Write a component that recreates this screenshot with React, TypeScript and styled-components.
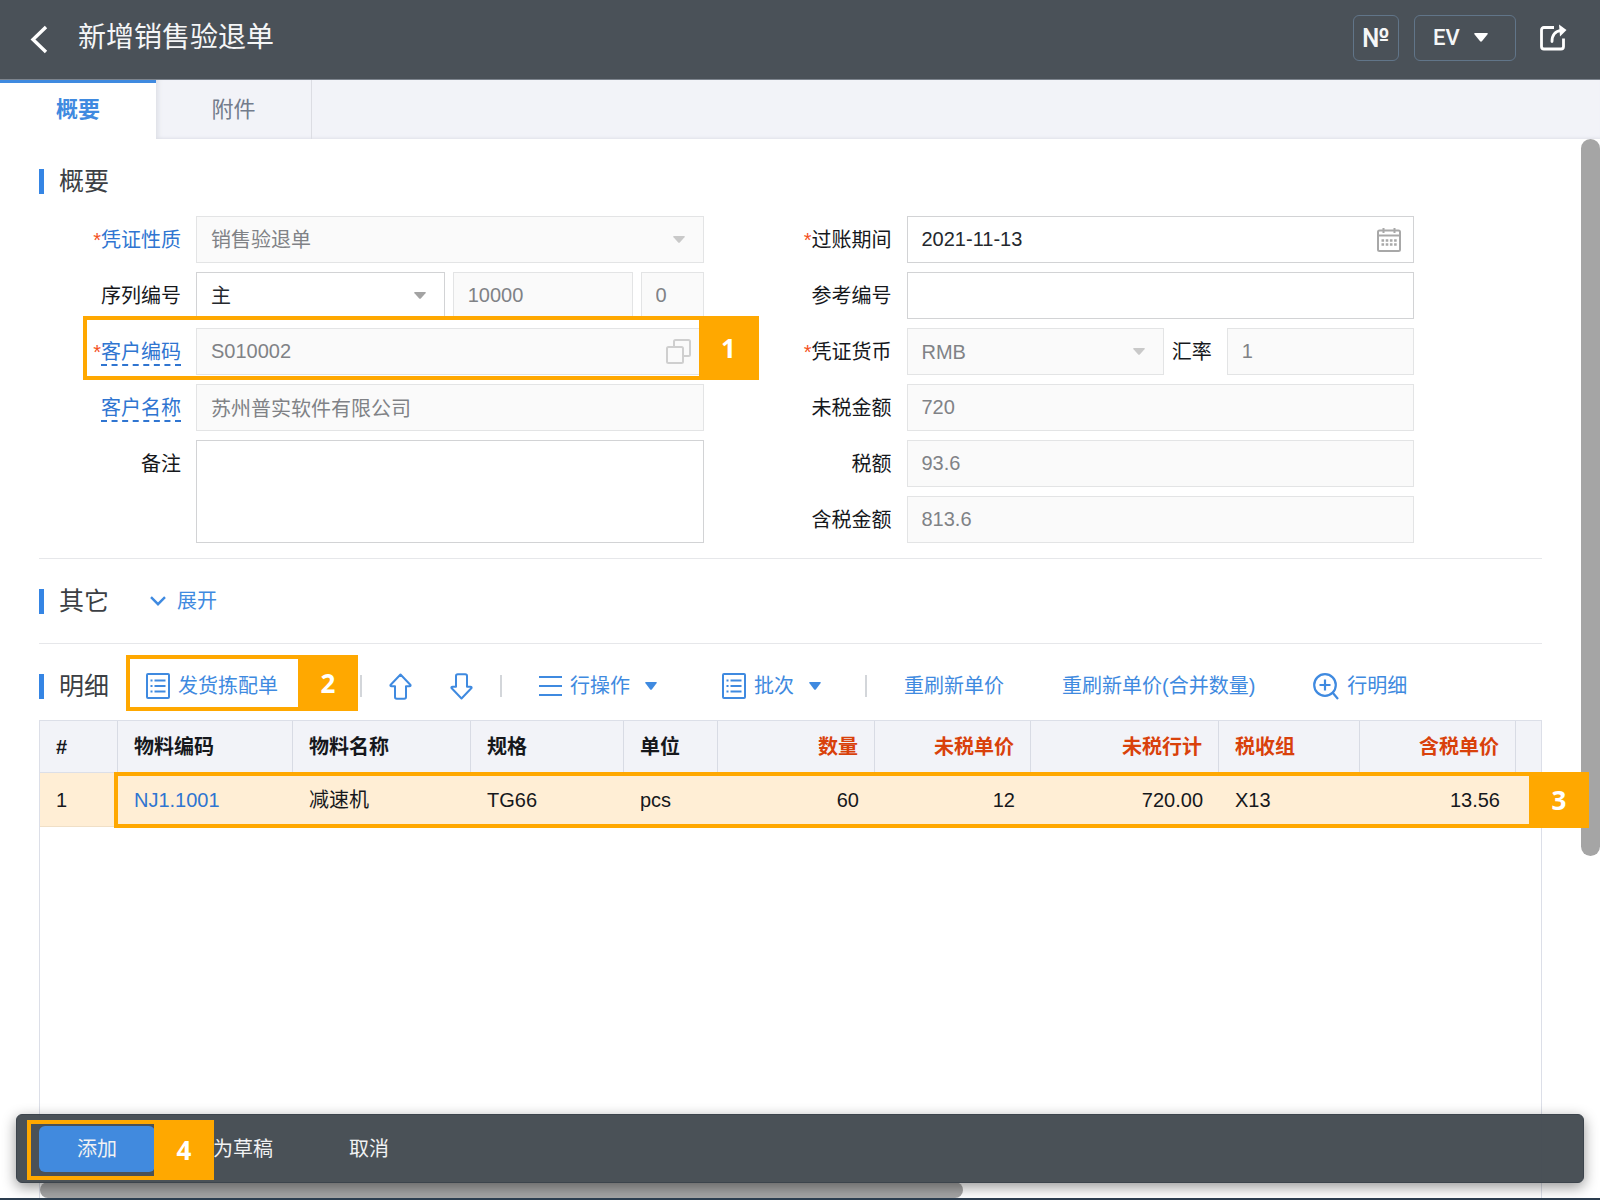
import React from "react";
import styled, { createGlobalStyle, css } from "styled-components";

const blue = "#3f8ae0";
const slate = "#4a5158";
const amber = "#ffa800";
const line = "#dcdfe8";
const sans = `"Liberation Sans", "Noto Sans CJK SC", sans-serif`;

const GlobalStyle = createGlobalStyle`
  *, *::before, *::after { box-sizing: border-box; }
  body { margin: 0; background: #fff; }
  button, input, select, textarea { font: inherit; color: inherit; }
  button { border: 0; padding: 0; background: none; cursor: pointer; white-space: nowrap; }
  a { text-decoration: none; }
  svg { display: block; flex: none; }
`;

const Page = styled.div`
  position: relative;
  display: flex;
  flex-direction: column;
  height: 100vh;
  overflow: hidden;
  border-bottom: 2px solid #2b3d4f;
  background: #fff;
  color: #16181c;
  font-family: ${sans};
  font-size: 20px;
  line-height: 24px;
`;

const Header = styled.header`
  display: flex;
  align-items: center;
  flex: none;
  height: 80px;
  padding: 0 33px 4px 30px;
  border-bottom: 1px solid #7d848d;
  background: ${slate};
  color: #f5f6f7;
`;

const Title = styled.h1`
  flex: 1;
  margin: 0 0 0 28px;
  font-size: 28px;
  line-height: 36px;
  font-weight: 400;
`;

const HeaderActions = styled.div`
  display: flex;
  align-items: center;
  gap: 15px;
`;

const OutlineButton = styled.button<{ $wide?: boolean }>`
  display: flex;
  align-items: center;
  justify-content: ${(p) => (p.$wide ? "flex-start" : "center")};
  gap: 14px;
  width: ${(p) => (p.$wide ? 102 : 46)}px;
  height: 46px;
  padding-left: ${(p) => (p.$wide ? 18 : 0)}px;
  border: 1px solid #617589;
  border-radius: 6px;
  font-family: ${(p) => (p.$wide ? "Roboto" : "Inter")}, sans-serif;
  font-size: ${(p) => (p.$wide ? 22 : 25)}px;
  font-weight: ${(p) => (p.$wide ? 500 : 700)};
`;

const ShareButton = styled.button`
  margin-left: 8px;
`;

const Tabs = styled.nav`
  display: flex;
  flex: none;
  height: 59px;
  background: #f2f3f8;
  box-shadow: inset 0 -3px 3px -2px #dfe1e8;
`;

const Tab = styled.button<{ $active?: boolean }>`
  width: 156px;
  font-size: 22px;
  color: #737c8c;
  border-right: 1px solid #dcdde3;
  box-shadow: inset 6px 0 5px -4px #dcdee5;
  ${(p) =>
    p.$active &&
    css`
      border-right: 0;
      background: #fff;
      color: ${blue};
      font-weight: 700;
      box-shadow: inset 0 3px 0 ${blue};
    `}
`;

const Content = styled.main`
  position: relative;
  display: flex;
  flex-direction: column;
  flex: 1;
  min-height: 0;
  padding: 0 58px 0 39px;
`;

const Section = styled.section<{ $fill?: boolean }>`
  display: flex;
  flex-direction: column;
  flex: ${(p) => (p.$fill ? "1" : "none")};
  min-height: 0;
  border-bottom: ${(p) => (p.$fill ? "0" : "1px solid #e6e7ea")};
`;

const SectionHead = styled.div<{ $height: number; $top?: number }>`
  display: flex;
  align-items: center;
  flex: none;
  height: ${(p) => p.$height}px;
  padding-top: ${(p) => p.$top ?? 0}px;
`;

const SectionTitle = styled.h2`
  display: flex;
  align-items: center;
  gap: 15px;
  flex: none;
  margin: 0;
  font-size: 25px;
  line-height: 25px;
  font-weight: 400;
  color: #3c3f44;
  &::before {
    content: "";
    width: 5px;
    height: 25px;
    background: #3585e4;
  }
`;

const Expand = styled.button`
  display: flex;
  align-items: center;
  gap: 11px;
  margin-left: 41px;
  color: ${blue};
`;

const Form = styled.form`
  display: grid;
  grid-template-columns: repeat(2, minmax(0, 1fr));
  column-gap: 46px;
  padding: 0 128px 15px 0;
`;

const Column = styled.div`
  display: flex;
  flex-direction: column;
  gap: 9px;
`;

const Row = styled.div<{ $tall?: boolean }>`
  position: relative;
  display: flex;
  align-items: flex-start;
  gap: 15px;
  height: ${(p) => (p.$tall ? 103 : 47)}px;
`;

const Label = styled.label<{ $link?: boolean }>`
  display: flex;
  justify-content: flex-end;
  align-items: center;
  flex: none;
  width: 142px;
  height: 47px;
  color: ${(p) => (p.$link ? "#2f75d1" : "#16181c")};
`;

const Required = styled.span`
  color: #f4511e;
`;

const DashedLink = styled.a`
  border-top: 2px solid transparent;
  border-bottom: 2px dashed #2f75d1;
  color: #2f75d1;
`;

const Controls = styled.div`
  display: flex;
  flex: 1;
  min-width: 0;
  height: 100%;
  gap: 8px;
`;

const Box = styled.div<{ $grow?: number }>`
  position: relative;
  flex: ${(p) => p.$grow ?? 1} 1 0;
  min-width: 0;
  height: 100%;
`;

const fieldStyle = css`
  display: block;
  width: 100%;
  height: 100%;
  margin: 0;
  padding: 0 14px;
  border: 1px solid #d2d3d5;
  border-radius: 0;
  outline: 0;
  background: #fff;
  color: #24282d;
  &:disabled {
    border-color: #e3e4e5;
    background: #fafafa;
    color: #808286;
    opacity: 1;
  }
`;

const Input = styled.input`
  ${fieldStyle}
`;

const Select = styled.select`
  ${fieldStyle}
  appearance: none;
`;

const TextArea = styled.textarea`
  ${fieldStyle}
  padding: 10px 14px;
  resize: none;
`;

const Adornment = styled.span<{ $right: number }>`
  position: absolute;
  top: 0;
  right: ${(p) => p.$right}px;
  display: flex;
  align-items: center;
  height: 100%;
  pointer-events: none;
`;

const InlineLabel = styled.label`
  flex: none;
  align-self: center;
  margin-right: 7px;
`;

const Callout = styled.div<{ $inset: string; $width?: number; $height?: number }>`
  position: absolute;
  inset: ${(p) => p.$inset};
  width: ${(p) => (p.$width ? `${p.$width}px` : "auto")};
  height: ${(p) => (p.$height ? `${p.$height}px` : "auto")};
  z-index: 3;
  display: flex;
  justify-content: flex-end;
  border: 4px solid ${amber};
  border-right: 0;
  pointer-events: none;
`;

const CalloutNumber = styled.strong`
  display: flex;
  align-items: center;
  justify-content: center;
  width: 60px;
  background: ${amber};
  color: #fff;
  font-family: "Open Sans", "Noto Sans", sans-serif;
  font-size: 26px;
  font-weight: 700;
`;

const Toolbar = styled.div`
  display: flex;
  align-items: center;
  flex: 1;
  min-width: 0;
  margin-left: 8px;
`;

const ToolSlot = styled.div`
  position: relative;
  display: flex;
  width: 235px;
`;

const Tool = styled.button<{ $menu?: boolean; $compact?: boolean }>`
  display: flex;
  align-items: center;
  gap: 8px;
  padding: 0 ${(p) => (p.$menu ? 36 : p.$compact ? 19 : 29)}px 0
    ${(p) => (p.$compact ? 19 : 29)}px;
  color: ${blue};
  white-space: nowrap;
`;

const MenuCaret = styled.span`
  margin-left: 7px;
`;

const Separator = styled.span`
  flex: none;
  width: 2px;
  height: 22px;
  margin: 0 8px;
  background: #d3d6da;
`;

const GridPanel = styled.div`
  position: relative;
  flex: 1;
  min-height: 0;
  border: 1px solid ${line};
  border-bottom: 0;
`;

const Table = styled.table`
  width: 100%;
  table-layout: fixed;
  border-collapse: separate;
  border-spacing: 0;
`;

const Th = styled.th<{ $num?: boolean; $hot?: boolean }>`
  height: 52px;
  padding: 0 16px;
  border-right: 1px solid #d8dbe4;
  border-bottom: 1px solid ${line};
  background: #f2f3f8;
  color: ${(p) => (p.$hot ? "#d9410b" : "#16181c")};
  text-align: ${(p) => (p.$num ? "right" : "left")};
  font-weight: 700;
  white-space: nowrap;
  &:last-child {
    padding: 0;
    border-right: 0;
  }
`;

const Td = styled.td<{ $num?: boolean }>`
  height: 54px;
  padding: 0 16px;
  border-bottom: 1px solid #f0dfc6;
  background: #ffeed5;
  text-align: ${(p) => (p.$num ? "right" : "left")};
  white-space: nowrap;
  &:last-child {
    padding: 0;
  }
`;

const CodeLink = styled.a`
  color: #2f75d1;
`;

const VerticalTrack = styled.div`
  position: absolute;
  top: 0;
  right: 0;
  bottom: 0;
  display: flex;
  flex-direction: column;
  width: 19px;
`;

const HorizontalTrack = styled.div`
  position: absolute;
  left: 40px;
  right: 58px;
  bottom: 0;
  display: flex;
  height: 16px;
`;

const Thumb = styled.div<{ $share: number }>`
  flex: ${(p) => p.$share} 1 0;
  border-radius: 10px;
  background: #a5a5a5;
`;

const Rest = styled.div<{ $share: number }>`
  flex: ${(p) => p.$share} 1 0;
`;

const ActionBar = styled.footer`
  position: absolute;
  left: 16px;
  right: 16px;
  bottom: 15px;
  z-index: 2;
  display: flex;
  align-items: center;
  height: 69px;
  padding: 0 22px;
  border: 1px solid #3c444c;
  border-radius: 6px;
  background: rgba(68, 75, 82, 0.97);
  box-shadow: 0 4px 14px rgba(0, 0, 0, 0.42);
  color: #f1f2f3;
`;

const ActionButton = styled.button<{ $primary?: boolean }>`
  height: 46px;
  padding: 0 38px;
  border-radius: 6px;
  background: ${(p) => (p.$primary ? "#418ade" : "transparent")};
`;

const Caret = ({ color, width = 12, height = 7 }: { color: string; width?: number; height?: number }) => (
  <svg width={width} height={height} viewBox="0 0 12 7" preserveAspectRatio="none" aria-hidden="true">
    <path d="M0.8 0H11.2Q12.3 0.2 11.5 1.2L6.8 6.5Q6 7.2 5.2 6.5L0.5 1.2Q-0.3 0.2 0.8 0Z" fill={color} />
  </svg>
);

const BackIcon = () => (
  <svg width="20" height="32" viewBox="0 0 20 32" fill="none" stroke="#fff" strokeWidth="3.4" aria-hidden="true">
    <path d="M16 5L3 17.500L16 30" />
  </svg>
);

const ShareIcon = () => (
  <svg width="28" height="28" viewBox="0 0 28 28" fill="none" stroke="#fff" strokeWidth="2.8" aria-hidden="true">
    <path d="M15 3.500H5Q2.500 3.500 2.500 6V22.500Q2.500 25 5 25H22Q24.500 25 24.500 22.500V14.500" />
    <path d="M13 17.500C13 11 16.500 7 22 6.500" strokeLinecap="round" />
    <path d="M20 0.500L27.500 6L21 12.500Z" fill="#fff" stroke="none" />
  </svg>
);

const CalendarIcon = () => (
  <svg width="24" height="24" viewBox="0 0 24 24" fill="none" stroke="#a8a8a8" aria-hidden="true">
    <rect x="1" y="2.500" width="22" height="20.500" rx="1.500" strokeWidth="2" />
    <path d="M1 7.500H23" strokeWidth="2" />
    <path d="M6.500 0V5M17.500 0V5" strokeWidth="2" />
    <path d="M4.500 12.500H20M4.500 16.500H20" strokeWidth="2.500" strokeDasharray="2.600 1.600" />
  </svg>
);

const PickerIcon = () => (
  <svg width="25" height="25" viewBox="0 0 25 25" fill="none" stroke="#cfcfcf" strokeWidth="2" aria-hidden="true">
    <rect x="1" y="8" width="16" height="16" rx="1.500" />
    <path d="M8 8V2.500Q8 1 9.500 1H22.500Q24 1 24 2.500V15.500Q24 17 22.500 17H17" />
  </svg>
);

const ChevronIcon = () => (
  <svg width="16" height="10" viewBox="0 0 16 10" fill="none" stroke={blue} strokeWidth="2.400" aria-hidden="true">
    <path d="M1 1.200L8 8.200L15 1.200" />
  </svg>
);

const ListIcon = () => (
  <svg width="24" height="26" viewBox="0 0 24 26" fill="none" stroke={blue} aria-hidden="true">
    <rect x="1" y="1" width="22" height="24" rx="1" strokeWidth="2" />
    <path d="M4.500 7.500H6.500M4.500 13H6.500M4.500 18.500H6.500M8.500 7.500H19.500M8.500 13H19.500M8.500 18.500H19.500" strokeWidth="1.800" />
  </svg>
);

const ArrowIcon = ({ down = false }: { down?: boolean }) => (
  <svg width="23" height="27" viewBox="0 0 23 27" fill="none" stroke={blue} strokeWidth="2" strokeLinejoin="round" aria-hidden="true">
    <path
      d={
        down
          ? "M11.500 25.500L1.500 15Q1 13.800 2.500 13.800H6V3Q6 1.200 7.800 1.200H15.200Q17 1.200 17 3V13.800H20.500Q22 13.800 21.500 15Z"
          : "M11.500 1.500L1.500 12Q1 13.200 2.500 13.200H6V24Q6 25.800 7.800 25.800H15.200Q17 25.800 17 24V13.200H20.500Q22 13.200 21.500 12Z"
      }
    />
  </svg>
);

const RowsIcon = () => (
  <svg width="23" height="20" viewBox="0 0 23 20" stroke={blue} strokeWidth="2" aria-hidden="true">
    <path d="M0 1H23M0 10H23M0 19H23" />
  </svg>
);

const ZoomInIcon = () => (
  <svg width="26" height="27" viewBox="0 0 26 27" fill="none" stroke={blue} strokeWidth="2.200" aria-hidden="true">
    <circle cx="12" cy="12" r="10.800" />
    <path d="M19.500 19.500L25 26M6.500 12H17.500M12 6.500V17.500" />
  </svg>
);

type FieldProps = {
  id: string;
  label: string;
  value?: string;
  disabled?: boolean;
};

const TextField = ({ id, label, value = "", disabled }: FieldProps) => (
  <Row>
    <Label htmlFor={id}>{label}</Label>
    <Controls>
      <Box>
        <Input id={id} defaultValue={value} disabled={disabled} />
      </Box>
    </Controls>
  </Row>
);

type SelectBoxProps = { id: string; value: string; grow?: number; disabled?: boolean };

const SelectBox = ({ id, value, grow, disabled }: SelectBoxProps) => (
  <Box $grow={grow}>
    <Select id={id} defaultValue={value} disabled={disabled}>
      <option>{value}</option>
    </Select>
    <Adornment $right={19}>
      <Caret color={disabled ? "#c9c9c9" : "#a3a3a3"} />
    </Adornment>
  </Box>
);

const columns = [
  { title: "#", value: "1", width: 78 },
  { title: "物料编码", value: "NJ1.1001", width: 175, link: true },
  { title: "物料名称", value: "减速机", width: 178 },
  { title: "规格", value: "TG66", width: 153 },
  { title: "单位", value: "pcs", width: 94 },
  { title: "数量", value: "60", width: 157, num: true, hot: true },
  { title: "未税单价", value: "12", width: 156, num: true, hot: true },
  { title: "未税行计", value: "720.00", width: 188, num: true, hot: true },
  { title: "税收组", value: "X13", width: 141, hot: true },
  { title: "含税单价", value: "13.56", width: 156, num: true, hot: true },
];

export default function App() {
  return (
    <Page>
      <GlobalStyle />
      <Header>
        <button aria-label="返回">
          <BackIcon />
        </button>
        <Title>新增销售验退单</Title>
        <HeaderActions>
          <OutlineButton>№</OutlineButton>
          <OutlineButton $wide>
            EV
            <Caret color="#fff" width={14} height={9} />
          </OutlineButton>
          <ShareButton aria-label="分享">
            <ShareIcon />
          </ShareButton>
        </HeaderActions>
      </Header>

      <Tabs>
        <Tab $active>概要</Tab>
        <Tab>附件</Tab>
      </Tabs>

      <Content>
        <Section>
          <SectionHead $height={77} $top={8}>
            <SectionTitle>概要</SectionTitle>
          </SectionHead>
          <Form>
            <Column>
              <Row>
                <Label htmlFor="nature" $link>
                  <Required>*</Required>凭证性质
                </Label>
                <Controls>
                  <SelectBox id="nature" value="销售验退单" disabled />
                </Controls>
              </Row>
              <Row>
                <Label htmlFor="series">序列编号</Label>
                <Controls>
                  <SelectBox id="series" value="主" grow={249} />
                  <Box $grow={180}>
                    <Input aria-label="编号" defaultValue="10000" disabled />
                  </Box>
                  <Box $grow={63}>
                    <Input aria-label="版本" defaultValue="0" disabled />
                  </Box>
                </Controls>
              </Row>
              <Row>
                <Label htmlFor="customer" $link>
                  <Required>*</Required>
                  <DashedLink href="#customer">客户编码</DashedLink>
                </Label>
                <Controls>
                  <Box>
                    <Input id="customer" defaultValue="S010002" disabled />
                    <Adornment $right={13}>
                      <PickerIcon />
                    </Adornment>
                  </Box>
                </Controls>
                <Callout $inset="-12px -55px -5px 44px">
                  <CalloutNumber>1</CalloutNumber>
                </Callout>
              </Row>
              <Row>
                <Label htmlFor="customerName" $link>
                  <DashedLink href="#customerName">客户名称</DashedLink>
                </Label>
                <Controls>
                  <Box>
                    <Input id="customerName" defaultValue="苏州普实软件有限公司" disabled />
                  </Box>
                </Controls>
              </Row>
              <Row $tall>
                <Label htmlFor="remark">备注</Label>
                <Controls>
                  <Box>
                    <TextArea id="remark" />
                  </Box>
                </Controls>
              </Row>
            </Column>

            <Column>
              <Row>
                <Label htmlFor="period">
                  <Required>*</Required>过账期间
                </Label>
                <Controls>
                  <Box>
                    <Input id="period" defaultValue="2021-11-13" />
                    <Adornment $right={13}>
                      <CalendarIcon />
                    </Adornment>
                  </Box>
                </Controls>
              </Row>
              <TextField id="reference" label="参考编号" />
              <Row>
                <Label htmlFor="currency">
                  <Required>*</Required>凭证货币
                </Label>
                <Controls>
                  <SelectBox id="currency" value="RMB" grow={257} disabled />
                  <InlineLabel htmlFor="rate">汇率</InlineLabel>
                  <Box $grow={187}>
                    <Input id="rate" defaultValue="1" disabled />
                  </Box>
                </Controls>
              </Row>
              <TextField id="net" label="未税金额" value="720" disabled />
              <TextField id="tax" label="税额" value="93.6" disabled />
              <TextField id="gross" label="含税金额" value="813.6" disabled />
            </Column>
          </Form>
        </Section>

        <Section>
          <SectionHead $height={84}>
            <SectionTitle>其它</SectionTitle>
            <Expand>
              <ChevronIcon />
              展开
            </Expand>
          </SectionHead>
        </Section>

        <Section $fill>
          <SectionHead $height={76} $top={8}>
            <SectionTitle>明细</SectionTitle>
            <Toolbar>
              <ToolSlot>
                <Tool>
                  <ListIcon />
                  发货拣配单
                </Tool>
                <Callout $inset="-18px -6px -12px 9px">
                  <CalloutNumber>2</CalloutNumber>
                </Callout>
              </ToolSlot>
              <Separator />
              <Tool $compact aria-label="上移">
                <ArrowIcon />
              </Tool>
              <Tool $compact aria-label="下移">
                <ArrowIcon down />
              </Tool>
              <Separator />
              <Tool $menu>
                <RowsIcon />
                行操作
                <MenuCaret>
                  <Caret color={blue} height={8} />
                </MenuCaret>
              </Tool>
              <Tool $menu>
                <ListIcon />
                批次
                <MenuCaret>
                  <Caret color={blue} height={8} />
                </MenuCaret>
              </Tool>
              <Separator />
              <Tool>重刷新单价</Tool>
              <Tool>重刷新单价(合并数量)</Tool>
              <Tool>
                <ZoomInIcon />
                行明细
              </Tool>
            </Toolbar>
          </SectionHead>
          <GridPanel>
            <Table>
              <colgroup>
                {columns.map((c) => (
                  <col key={c.title} width={c.width} />
                ))}
                <col />
              </colgroup>
              <thead>
                <tr>
                  {columns.map((c) => (
                    <Th key={c.title} $num={c.num} $hot={c.hot}>
                      {c.title}
                    </Th>
                  ))}
                  <Th />
                </tr>
              </thead>
              <tbody>
                <tr>
                  {columns.map((c) => (
                    <Td key={c.title} $num={c.num}>
                      {c.link ? <CodeLink href="#item">{c.value}</CodeLink> : c.value}
                    </Td>
                  ))}
                  <Td />
                </tr>
              </tbody>
            </Table>
            <Callout $inset="51px -48px auto 74px" $height={56}>
              <CalloutNumber>3</CalloutNumber>
            </Callout>
          </GridPanel>
        </Section>

        <VerticalTrack>
          <Thumb $share={717} />
          <Rest $share={342} />
        </VerticalTrack>
        <HorizontalTrack>
          <Thumb $share={923} />
          <Rest $share={579} />
        </HorizontalTrack>
      </Content>

      <ActionBar>
        <ActionButton $primary>添加</ActionButton>
        <ActionButton>存为草稿</ActionButton>
        <ActionButton>取消</ActionButton>
        <Callout $inset="5px auto 2px 10px" $width={187}>
          <CalloutNumber>4</CalloutNumber>
        </Callout>
      </ActionBar>
    </Page>
  );
}
